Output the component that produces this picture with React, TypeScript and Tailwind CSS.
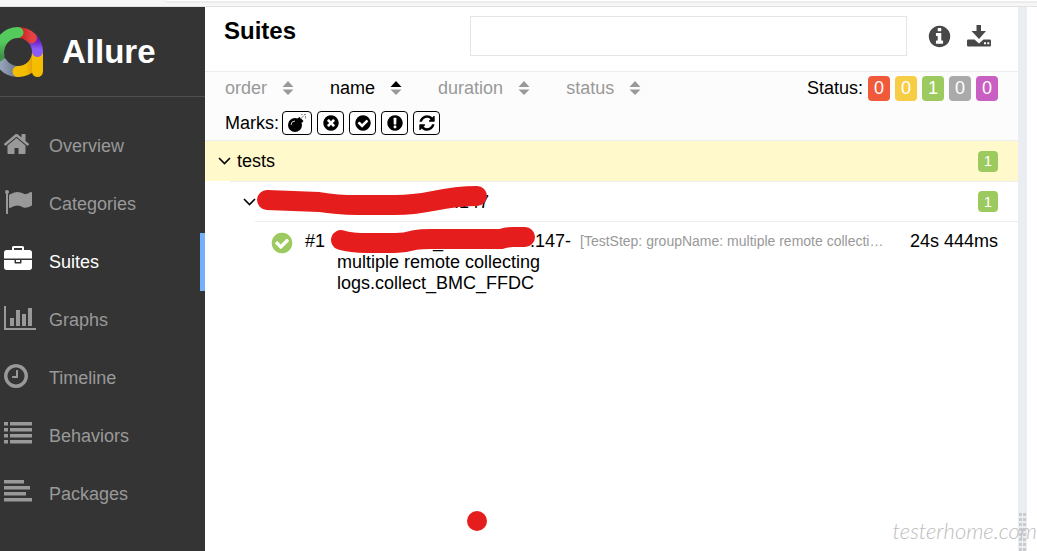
import React from 'react'
import clsx from 'clsx'

// Shared outer disc of the round icons
const DISC =
  'M1664 896q0 209-103 385.5t-279.5 279.5-385.5 103-385.5-103-279.5-279.5-103-385.5 103-385.5 279.5-279.5 385.5-103 385.5 103 279.5 279.5 103 385.5z'

const paths = {
  home: 'M1472 992v480q0 26-19 45t-45 19h-384v-384h-256v384h-384q-26 0-45-19t-19-45v-480q0-1 .5-3t.5-3l575-474 575 474q1 2 1 6zm223-69l-62 74q-8 9-21 11h-3q-13 0-21-7l-692-577-692 577q-12 8-24 7-13-2-21-11l-62-74q-8-10-7-23.5t11-21.5l719-599q32-26 76-26t76 26l244 204v-195q0-14 9-23t23-9h192q14 0 23 9t9 23v408l219 182q10 8 11 21.5t-7 23.5z',
  flag: 'M320 256q0 72-64 110v1266q0 13-9.5 22.5t-22.5 9.5h-64q-13 0-22.5-9.5t-9.5-22.5v-1266q-64-38-64-110 0-53 37.5-90.5t90.5-37.5 90.5 37.5 37.5 90.5zm1472 64v763q0 25-12.5 38.5t-39.5 27.5q-215 116-369 116-61 0-123.5-22t-108.5-48-115.5-48-142.5-22q-192 0-464 146-17 9-33 9-26 0-45-19t-19-45v-742q0-32 31-55 21-14 79-43 236-120 421-120 107 0 200 29t219 88q38 19 88 19 54 0 117.5-21t110-47 88-47 54.5-21q26 0 45 19t19 45z',
  briefcase:
    'M640 256h512v-128h-512v128zm1152 640v480q0 66-47 113t-113 47h-1472q-66 0-113-47t-47-113v-480h672v160q0 26 19 45t45 19h320q26 0 45-19t19-45v-160h672zm-768 0v128h-256v-128h256zm768-480v384h-1792v-384q0-66 47-113t113-47h352v-160q0-40 28-68t68-28h576q40 0 68 28t28 68v160h352q66 0 113 47t47 113z',
  chart:
    'M640 896v512h-256v-512h256zm384-512v1024h-256v-1024h256zm1024 1152v128h-2048v-1536h128v1408h1920zm-640-896v768h-256v-768h256zm384-384v1152h-256v-1152h256z',
  clock:
    'M1024 544v448q0 14-9 23t-23 9h-320q-14 0-23-9t-9-23v-64q0-14 9-23t23-9h224v-352q0-14 9-23t23-9h64q14 0 23 9t9 23zM1440 896q0-148-73-273t-198-198-273-73-273 73-198 198-73 273 73 273 198 198 273 73 273-73 198-198 73-273z' +
    DISC,
  list: 'M0 128h256v224H0zM384 128h1408v224H384zM0 512h256v224H0zM384 512h1408v224H384zM0 896h256v224H0zM384 896h1408v224H384zM0 1280h256v224H0zM384 1280h1408v224H384z',
  align: 'M0 128h1280v224H0zM0 512h1664v224H0zM0 896h1408v224H0zM0 1280h1792v224H0z',
  times:
    'M1277 1122q0-26-19-45l-181-181 181-181q19-19 19-45 0-27-19-46l-90-90q-19-19-46-19-26 0-45 19l-181 181-181-181q-19-19-45-19-27 0-46 19l-90 90q-19 19-19 46 0 26 19 45l181 181-181 181q-19 19-19 45 0 27 19 46l90 90q19 19 46 19 26 0 45-19l181-181 181 181q19 19 45 19 27 0 46-19l90-90q19-19 19-46z' +
    DISC,
  check:
    'M1412 734q0-28-18-46l-91-90q-19-19-45-19t-45 19l-408 407-226-226q-19-19-45-19t-45 19l-91 90q-18 18-18 46 0 27 18 45l362 362q19 19 45 19 27 0 46-19l543-543q18-18 18-45z' +
    DISC,
  exclamation:
    'M1024 1375v-190q0-14-9-23.5t-22-9.5h-192q-13 0-23 10t-10 23v190q0 13 10 23t23 10h192q13 0 22-9.5t9-23.5zm-2-344l18-621q0-12-10-18-10-8-24-8h-220q-14 0-24 8-10 6-10 18l17 621q0 10 10 17.5t24 7.5h185q14 0 23.5-7.5t10.5-17.5z' +
    DISC,
  info:
    'M1152 1376v-160q0-14-9-23t-23-9h-96v-512q0-14-9-23t-23-9h-320q-14 0-23 9t-9 23v160q0 14 9 23t23 9h96v320h-96q-14 0-23 9t-9 23v160q0 14 9 23t23 9h448q14 0 23-9t9-23zm-128-896v-160q0-14-9-23t-23-9h-192q-14 0-23 9t-9 23v160q0 14 9 23t23 9h192q14 0 23-9t9-23z' +
    DISC,
  refresh:
    'M1639 1056q0 5-1 7-64 268-268 434.5t-478 166.5q-146 0-282.5-55t-243.5-157l-129 129q-19 19-45 19t-45-19-19-45v-448q0-26 19-45t45-19h448q26 0 45 19t19 45-19 45l-137 137q71 66 161 102t187 36q134 0 250-65t186-179q11-17 53-117 8-23 30-23h192q13 0 22.5 9.5t9.5 22.5zm25-800v448q0 26-19 45t-45 19h-448q-26 0-45-19t-19-45 19-45l138-138q-148-137-349-137-134 0-250 65t-186 179q-11 17-53 117-8 23-30 23h-199q-13 0-22.5-9.5t-9.5-22.5v-7q65-268 270-434.5t480-166.5q146 0 284 55.5t245 156.5l130-129q19-19 45-19t45 19 19 45z',
}

type IconName = keyof typeof paths

// Glyphs drawn inside a side bearing, left-aligned in the menu
const bearings: Partial<Record<IconName, number>> = { home: 96, clock: 128 }

const Icon: React.FC<{ name: IconName; className?: string }> = ({ name, className }) => (
  <svg
    viewBox={`${bearings[name] ?? 0} 0 1792 1792`}
    fill="currentColor"
    fillRule="evenodd"
    overflow="visible"
    aria-hidden="true"
    className={className}
  >
    <path d={paths[name]} />
  </svg>
)

const BombIcon = () => (
  <svg viewBox="0 0 20 20" className="size-5" aria-hidden="true">
    <circle cx="8" cy="12" r="7" fill="#000" />
    <path d="M10.5 5.5l2-1.500 4 4-1.800 2z" fill="#000" />
    <path d="M4 12a4 4 0 0 1 4-4" fill="none" stroke="#fff" strokeWidth="0.8" />
    <path
      d="M13.500 6l3.500-3.500M14 1.500h1.500M17 1.500h2M18.500 3v2.500"
      fill="none"
      stroke="#8a8a8a"
    />
  </svg>
)

const DownloadIcon = () => (
  <svg viewBox="0 0 24 22" className="h-[22px] w-6" fill="#484848" aria-hidden="true">
    <path d="M9.500 0h4.500v6h5L12 14 4.500 6h5z" />
    <path
      fillRule="evenodd"
      d="M1.200 14.500h6.300L12 18.500l4.500-4h6.300a1.200 1.200 0 0 1 1.200 1.200v4.600a1.200 1.200 0 0 1-1.200 1.200H1.200A1.200 1.200 0 0 1 0 20.300v-4.600a1.200 1.200 0 0 1 1.200-1.200zM17 17.300v2h2v-2zM20.300 17.300v2h2v-2z"
    />
  </svg>
)

const Chevron = () => (
  <svg viewBox="0 0 13 8" className="h-2 w-[13px] shrink-0" aria-hidden="true">
    <path d="M1 1l5.500 5.500L12 1" fill="none" stroke="#000" strokeWidth="1.600" />
  </svg>
)

const Logo = () => (
  <svg viewBox="0 0 46 52" className="h-[52px] w-[46px] shrink-0" aria-hidden="true">
    <defs>
      <linearGradient id="yellow" x1="0" x2="1">
        <stop offset="0.4" stopColor="#f5bd00" />
        <stop offset="1" stopColor="#d98a06" />
      </linearGradient>
      <linearGradient id="purple" x1="0" y1="0" x2="0" y2="1">
        <stop offset="0.2" stopColor="#6a1fc4" />
        <stop offset="0.8" stopColor="#8b5cf6" />
      </linearGradient>
      <linearGradient id="green" x1="0" y1="0" x2="0" y2="1">
        <stop offset="0.4" stopColor="#54c95c" />
        <stop offset="1" stopColor="#3f9447" />
      </linearGradient>
      <linearGradient id="red" x1="0" x2="1">
        <stop offset="0.3" stopColor="#cc2424" />
        <stop offset="1" stopColor="#e44343" />
      </linearGradient>
      <linearGradient id="slate" x1="0" x2="1">
        <stop offset="0" stopColor="#95a3b8" />
        <stop offset="1" stopColor="#66748a" />
      </linearGradient>
    </defs>
    <g fill="none" strokeWidth="11" strokeLinecap="round">
      <path d="M1.500 36.500A19.500 19.500 0 0 0 18 45.500" stroke="url(#slate)" />
      <path d="M18 45.500A19.500 19.500 0 0 0 37.500 26" stroke="url(#yellow)" />
      <path d="M37.500 28v17.500" stroke="#f5bd00" />
      <path d="M31.500 12A19.500 19.500 0 0 1 37.500 25.500" stroke="url(#purple)" />
      <path d="M18 6.500A19.500 19.500 0 0 1 31.500 12" stroke="url(#red)" />
      <path d="M-1 30A19.500 19.500 0 0 1 18 6.500" stroke="url(#green)" />
    </g>
  </svg>
)

const navItems: { label: string; icon: IconName; active?: boolean }[] = [
  { label: 'Overview', icon: 'home' },
  { label: 'Categories', icon: 'flag' },
  { label: 'Suites', icon: 'briefcase', active: true },
  { label: 'Graphs', icon: 'chart' },
  { label: 'Timeline', icon: 'clock' },
  { label: 'Behaviors', icon: 'list' },
  { label: 'Packages', icon: 'align' },
]

const Sidebar = () => (
  <aside className="w-[205px] shrink-0 bg-[#343434]">
    <div className="flex h-[90px] items-center gap-4 border-b border-[#4e4e4e]">
      <Logo />
      <span className="text-[33px] font-bold text-white">Allure</span>
    </div>
    <nav className="pt-5">
      {navItems.map((item) => (
        <a
          key={item.label}
          href={`#${item.label.toLowerCase()}`}
          className={clsx(
            'flex h-[58px] items-center border-r-[5px] pl-1',
            item.active ? 'border-[#75b1f9] text-white' : 'border-transparent text-[#999]',
          )}
        >
          <span className="w-[45px] shrink-0 pb-1">
            <Icon name={item.icon} className="size-7" />
          </span>
          {item.label}
        </a>
      ))}
    </nav>
  </aside>
)

const sorters = [
  { label: 'order' },
  { label: 'name', ascending: true },
  { label: 'duration' },
  { label: 'status' },
]

const statuses = [
  { name: 'failed', count: 0, color: 'bg-[#f05a3a]' },
  { name: 'broken', count: 0, color: 'bg-[#f8cd46]' },
  { name: 'passed', count: 1, color: 'bg-[#9dca5f]' },
  { name: 'skipped', count: 0, color: 'bg-[#aaa]' },
  { name: 'unknown', count: 0, color: 'bg-[#c95fc2]' },
]

const marks: { name: string; icon: IconName }[] = [
  { name: 'New failed', icon: 'times' },
  { name: 'New passed', icon: 'check' },
  { name: 'New broken', icon: 'exclamation' },
  { name: 'Retries', icon: 'refresh' },
]

const Toolbar = () => (
  <div className="h-[69px] border-b border-[#eceff1] bg-[#fcfcfc] px-5">
    <div className="flex h-8 items-center justify-between">
      <div className="flex gap-9">
        {sorters.map((sorter) => (
          <button
            key={sorter.label}
            type="button"
            className={clsx(
              'flex items-center gap-[15px]',
              sorter.ascending ? 'text-black' : 'text-[#999]',
            )}
          >
            {sorter.label}
            <svg viewBox="0 0 12 14" className="h-3.5 w-3" aria-hidden="true">
              <path d="M6 0l5.500 6H.5z" fill="currentColor" />
              <path d="M6 14l5.500-5.500H.5z" fill="#999" />
            </svg>
          </button>
        ))}
      </div>
      <div className="flex items-center gap-[5px]">
        Status:
        {statuses.map((status) => (
          <button
            key={status.name}
            type="button"
            aria-label={`${status.name}: ${status.count}`}
            className={clsx('h-[25px] w-[22px] rounded text-white', status.color)}
          >
            {status.count}
          </button>
        ))}
      </div>
    </div>
    <div className="flex h-9 items-center gap-[3px] pt-0.5">
      Marks:
      <div className="flex gap-[5px]">
        <button
          type="button"
          aria-label="Flaky"
          className="flex h-6 w-[30px] items-center justify-center rounded border border-black bg-white"
        >
          <BombIcon />
        </button>
        {marks.map((mark) => (
          <button
            key={mark.name}
            type="button"
            aria-label={mark.name}
            className="flex h-6 w-[27px] items-center justify-center rounded border border-black bg-white"
          >
            <Icon name={mark.icon} className="size-[18px]" />
          </button>
        ))}
      </div>
    </div>
  </div>
)

const PassedCount: React.FC<{ count: number }> = ({ count }) => (
  <span className="ml-auto flex h-[21px] w-5 items-center justify-center rounded bg-[#9dca5f] text-[15px] text-white">
    {count}
  </span>
)

const Marker: React.FC<{ d: string; className: string }> = ({ d, className }) => (
  <svg className={clsx('absolute overflow-visible', className)} aria-hidden="true">
    <path
      d={d}
      fill="none"
      stroke="#e61d1d"
      strokeWidth="20"
      strokeLinecap="round"
      strokeLinejoin="round"
    />
  </svg>
)

const Tree = () => (
  <div>
    <div className="flex h-10 items-center gap-1.5 bg-[#fff9cb] pr-5 pl-[13px]">
      <Chevron />
      tests
      <PassedCount count={1} />
    </div>
    <div className="relative ml-[25px] flex h-10 items-center border-t border-[#eceff1] pr-5 pl-[13px]">
      <Chevron />
      <span className="ml-[198px]">.147</span>
      <Marker
        className="top-0 left-[27px] h-10 w-[232px]"
        d="M10 18L62 20Q80 23 100 23L138 23Q156 23 176 19Q200 14 220 14"
      />
      <PassedCount count={1} />
    </div>
    <div className="relative ml-[50px] flex items-start border-t border-[#eceff1] pt-[9px] pr-5 pl-[15px] leading-[21px]">
      <Icon name="check" className="size-6 shrink-0 text-[#9dca5f]" />
      <span className="ml-[11px] w-8 shrink-0">#1</span>
      <a href="#testresult" className="w-[243px] shrink-0">
        <span className="flex">
          <span className="ml-24">_</span>
          <span className="ml-[87px]">.147-</span>
        </span>
        <span className="block w-[210px]">multiple remote collecting logs.collect_BMC_FFDC</span>
      </a>
      <Marker
        className="top-0 left-[76px] h-8 w-[204px]"
        d="M10 18Q20 21 36 21L64 21Q74 21 84 18Q90 17 100 17L170 17Q176 15 182 15L194 15"
      />
      <span className="min-w-0 flex-1 truncate text-sm leading-[21px] text-[#999]">
        [TestStep: groupName: multiple remote collecti…
      </span>
      <span className="shrink-0">24s 444ms</span>
    </div>
  </div>
)

const SuitesPane = () => (
  <main className="min-w-0 flex-1 bg-white">
    <header className="flex h-[65px] items-start border-b border-[#ececec] pr-[27px] pl-[19px]">
      <h1 className="w-[246px] shrink-0 pt-1.5 text-2xl leading-9 font-bold">Suites</h1>
      <input
        type="search"
        aria-label="Search suites"
        className="mt-[9px] h-10 min-w-0 flex-1 border border-[#e4e4e4] bg-white px-2 outline-none"
      />
      <div className="ml-5 flex h-[58px] items-center gap-[15px]">
        <button type="button" aria-label="Information">
          <Icon name="info" className="size-[25px] text-[#484848]" />
        </button>
        <button type="button" aria-label="Download CSV">
          <DownloadIcon />
        </button>
      </div>
    </header>
    <Toolbar />
    <Tree />
  </main>
)

// Drag handle between the two panes
const Gutter = () => (
  <div className="flex w-[9px] shrink-0 flex-col items-center justify-end bg-[#eaeef2]">
    <div className="grid grid-cols-2 gap-x-px gap-y-0.5">
      {Array.from({ length: 16 }, (_, i) => (
        <span key={i} className="size-[3px] bg-[#c9cbcd]" />
      ))}
    </div>
  </div>
)

export default function App() {
  return (
    <div className="relative flex min-h-screen flex-col overflow-hidden bg-white font-['Liberation_Sans',Arial,sans-serif] text-lg leading-6 text-black">
      <div className="h-[7px] border-b border-[#e2e2e2] bg-[#f6f6f6]">
        <div className="ml-[165px] h-[3px] rounded-bl-md border-b-2 border-[#ececec] bg-white" />
      </div>
      <div className="flex flex-1">
        <Sidebar />
        <SuitesPane />
        <Gutter />
        <div className="w-2.5 shrink-0 bg-white" />
      </div>
      <span className="absolute bottom-5 left-[467px] size-5 rounded-full bg-[#e61d1d]" />
      <span className="absolute right-0 bottom-2 font-[Lato,sans-serif] text-[22px] font-light text-[#bdbdbd] italic">
        testerhome.com
      </span>
    </div>
  )
}
